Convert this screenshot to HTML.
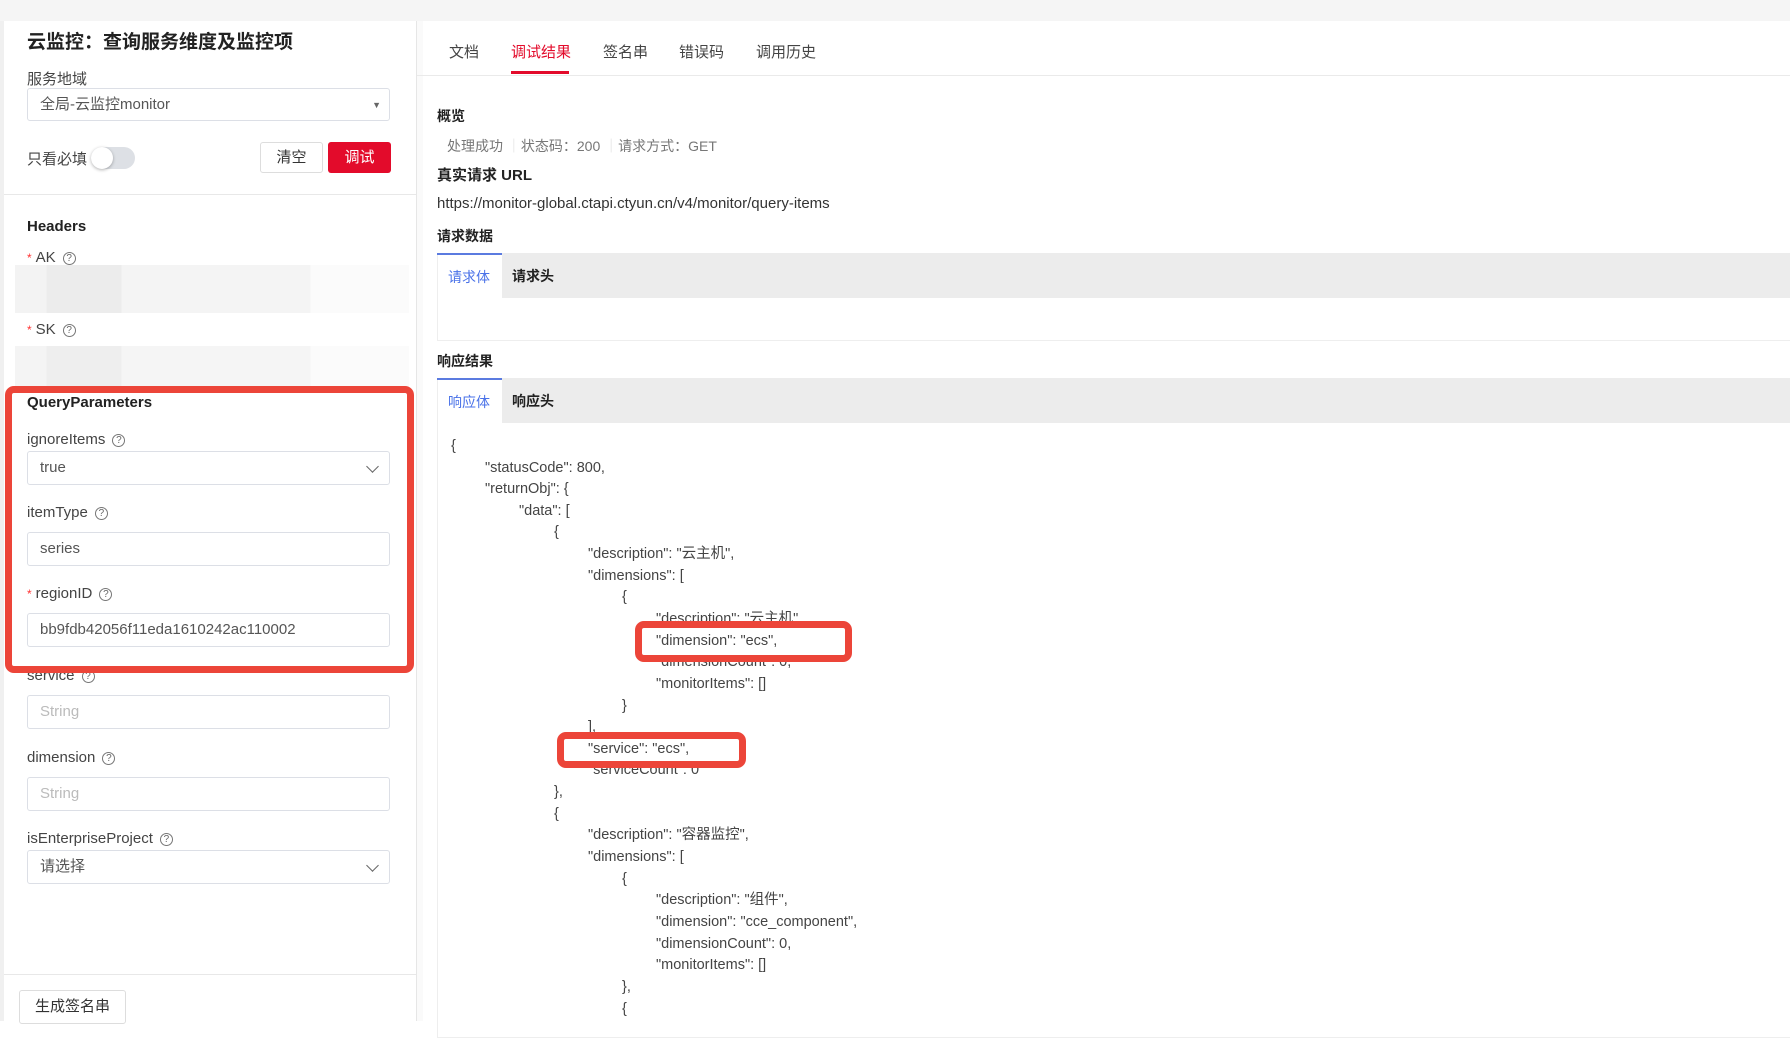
<!DOCTYPE html>
<html><head><meta charset="utf-8"><style>
*{margin:0;padding:0;box-sizing:border-box}
body{width:1790px;height:1021px;overflow:hidden;background:#fff;font-family:"Liberation Sans","Noto Sans CJK SC",sans-serif;color:#333;position:relative}
.a{position:absolute;white-space:nowrap}
.lbl{font-size:15px;color:#444}
.inp{position:absolute;left:27px;width:363px;height:34px;border:1px solid #dcdfe6;border-radius:3px;background:#fff;font-size:15px;padding-left:12px;line-height:32px;color:#555}
.ph{color:#bbb}
.q{display:inline-block;width:13px;height:13px;border:1px solid #777;border-radius:50%;font-size:10px;line-height:11px;text-align:center;color:#666;margin-left:7px;vertical-align:1px}
.star{color:#f33;font-size:12px;margin-right:4px}
.chev{position:absolute;right:12px;top:10px;width:9px;height:9px;border-right:1.5px solid #666;border-bottom:1.5px solid #666;transform:rotate(45deg)}
.b{font-weight:bold;color:#222}
.j{position:absolute;font-size:14.5px;line-height:18px;height:18px;color:#444;white-space:pre}
.rb{position:absolute;border:7px solid #ec4539;border-radius:9px}
</style></head><body>
<div class="a" style="left:0;top:0;width:1790px;height:21px;background:#f5f5f5"></div>
<div class="a" style="left:0;top:21px;width:4px;height:1000px;background:#f0f0f0"></div>
<div class="a" style="left:416px;top:21px;width:1px;height:1000px;background:#e6e6e6"></div>
<div class="a" style="left:417px;top:21px;width:6px;height:1000px;background:#fafafa"></div>

<div class="a b" style="left:27px;top:27px;font-size:19px">云监控：查询服务维度及监控项</div>
<div class="a lbl" style="left:27px;top:68px">服务地域</div>
<div class="inp" style="top:88px;height:33px">全局-云监控monitor<span style="position:absolute;right:8px;top:0;font-size:9px;color:#666">▼</span></div>
<div class="a lbl" style="left:27px;top:148px">只看必填</div>
<div class="a" style="left:91px;top:147px;width:44px;height:22px;border-radius:11px;background:#dde0e5"></div>
<div class="a" style="left:91px;top:147px;width:22px;height:22px;border-radius:50%;background:#fff;box-shadow:0 1px 3px rgba(0,0,0,.3)"></div>
<div class="a" style="left:260px;top:142px;width:63px;height:31px;border:1px solid #ddd;border-radius:3px;text-align:center;line-height:29px;font-size:15px">清空</div>
<div class="a" style="left:328px;top:142px;width:63px;height:31px;background:#e30b2b;border-radius:3px;text-align:center;line-height:31px;font-size:15px;color:#fff">调试</div>
<div class="a" style="left:4px;top:194px;width:412px;height:1px;background:#e8e8e8"></div>

<div class="a b" style="left:27px;top:218px;font-size:15px">Headers</div>
<div class="a lbl" style="left:27px;top:249px"><span class="star">*</span>AK<span class="q">?</span></div>
<div class="a" style="left:15px;top:265px;width:394px;height:48px;background:linear-gradient(90deg,#f3f3f3 0 8%,#ececec 8% 27%,#f4f4f4 27% 75%,#fbfbfb 75%)"></div>
<div class="a lbl" style="left:27px;top:321px"><span class="star">*</span>SK<span class="q">?</span></div>
<div class="a" style="left:15px;top:346px;width:394px;height:40px;background:linear-gradient(90deg,#f4f4f4 0 8%,#eeeeee 8% 27%,#f5f5f5 27% 75%,#fbfbfb 75%)"></div>

<div class="a b" style="left:27px;top:394px;font-size:15px">QueryParameters</div>
<div class="a lbl" style="left:27px;top:431px">ignoreItems<span class="q">?</span></div>
<div class="inp" style="top:451px">true<span class="chev"></span></div>
<div class="a lbl" style="left:27px;top:504px">itemType<span class="q">?</span></div>
<div class="inp" style="top:532px">series</div>
<div class="a lbl" style="left:27px;top:585px"><span class="star">*</span>regionID<span class="q">?</span></div>
<div class="inp" style="top:613px">bb9fdb42056f11eda1610242ac110002</div>
<div class="a lbl" style="left:27px;top:667px">service<span class="q">?</span></div>
<div class="inp ph" style="top:695px">String</div>
<div class="a lbl" style="left:27px;top:749px">dimension<span class="q">?</span></div>
<div class="inp ph" style="top:777px">String</div>
<div class="a lbl" style="left:27px;top:830px">isEnterpriseProject<span class="q">?</span></div>
<div class="inp" style="top:850px">请选择<span class="chev"></span></div>
<div class="rb" style="left:5px;top:386px;width:409px;height:287px"></div>
<div class="a" style="left:4px;top:974px;width:412px;height:1px;background:#e8e8e8"></div>
<div class="a" style="left:19px;top:990px;width:107px;height:34px;border:1px solid #ddd;border-radius:3px;text-align:center;line-height:32px;font-size:15px">生成签名串</div>

<div class="a" style="left:449px;top:41px;font-size:15px;color:#444">文档</div>
<div class="a" style="left:511px;top:41px;font-size:15px;color:#e30b2b">调试结果</div>
<div class="a" style="left:511px;top:71px;width:58px;height:3px;background:#e30b2b"></div>
<div class="a" style="left:603px;top:41px;font-size:15px;color:#444">签名串</div>
<div class="a" style="left:679px;top:41px;font-size:15px;color:#444">错误码</div>
<div class="a" style="left:756px;top:41px;font-size:15px;color:#444">调用历史</div>
<div class="a" style="left:417px;top:75px;width:1373px;height:1px;background:#eaeaea"></div>

<div class="a b" style="left:437px;top:106px;font-size:14px">概览</div>
<div class="a" style="left:447px;top:136px;font-size:14px;color:#777">处理成功 <span style="color:#ddd">｜</span>状态码：200 <span style="color:#ddd">｜</span>请求方式：GET</div>
<div class="a b" style="left:437px;top:164px;font-size:15px">真实请求 URL</div>
<div class="a" style="left:437px;top:195px;font-size:15px;color:#333">https://monitor-global.ctapi.ctyun.cn/v4/monitor/query-items</div>
<div class="a b" style="left:437px;top:226px;font-size:14px">请求数据</div>
<div class="a" style="left:437px;top:253px;width:1353px;height:88px;border:1px solid #eee;border-right:0"></div>
<div class="a" style="left:502px;top:253px;width:1288px;height:45px;background:#ececec"></div>
<div class="a" style="left:437px;top:253px;width:65px;height:2px;background:#5b7be0"></div>
<div class="a" style="left:448px;top:267px;font-size:14px;color:#4a72e8">请求体</div>
<div class="a b" style="left:512px;top:266px;font-size:14px">请求头</div>
<div class="a b" style="left:437px;top:351px;font-size:14px">响应结果</div>
<div class="a" style="left:437px;top:378px;width:1353px;height:660px;border:1px solid #eee;border-right:0"></div>
<div class="a" style="left:502px;top:378px;width:1288px;height:45px;background:#ececec"></div>
<div class="a" style="left:437px;top:378px;width:65px;height:2px;background:#5b7be0"></div>
<div class="a" style="left:448px;top:392px;font-size:14px;color:#4a72e8">响应体</div>
<div class="a b" style="left:512px;top:391px;font-size:14px">响应头</div>

<div class="j" style="left:451px;top:437px">{</div>
<div class="j" style="left:485px;top:459px">"statusCode": 800,</div>
<div class="j" style="left:485px;top:480px">"returnObj": {</div>
<div class="j" style="left:519px;top:502px">"data": [</div>
<div class="j" style="left:554px;top:523px">{</div>
<div class="j" style="left:588px;top:545px">"description": "云主机",</div>
<div class="j" style="left:588px;top:567px">"dimensions": [</div>
<div class="j" style="left:622px;top:588px">{</div>
<div class="j" style="left:656px;top:610px">"description": "云主机",</div>
<div class="j" style="left:656px;top:653px">"dimensionCount": 0,</div>
<div class="j" style="left:656px;top:675px">"monitorItems": []</div>
<div class="j" style="left:622px;top:697px">}</div>
<div class="j" style="left:588px;top:718px">],</div>
<div class="j" style="left:588px;top:761px">"serviceCount": 0</div>
<div class="j" style="left:554px;top:783px">},</div>
<div class="j" style="left:554px;top:805px">{</div>
<div class="j" style="left:588px;top:826px">"description": "容器监控",</div>
<div class="j" style="left:588px;top:848px">"dimensions": [</div>
<div class="j" style="left:622px;top:870px">{</div>
<div class="j" style="left:656px;top:891px">"description": "组件",</div>
<div class="j" style="left:656px;top:913px">"dimension": "cce_component",</div>
<div class="j" style="left:656px;top:935px">"dimensionCount": 0,</div>
<div class="j" style="left:656px;top:956px">"monitorItems": []</div>
<div class="j" style="left:622px;top:978px">},</div>
<div class="j" style="left:622px;top:1000px">{</div>

<div class="rb" style="left:635px;top:621px;width:217px;height:41px;background:#fff"></div>
<div class="j" style="left:656px;top:632px">"dimension": "ecs",</div>
<div class="rb" style="left:557px;top:732px;width:189px;height:36px;background:#fff"></div>
<div class="j" style="left:588px;top:740px">"service": "ecs",</div>
</body></html>
